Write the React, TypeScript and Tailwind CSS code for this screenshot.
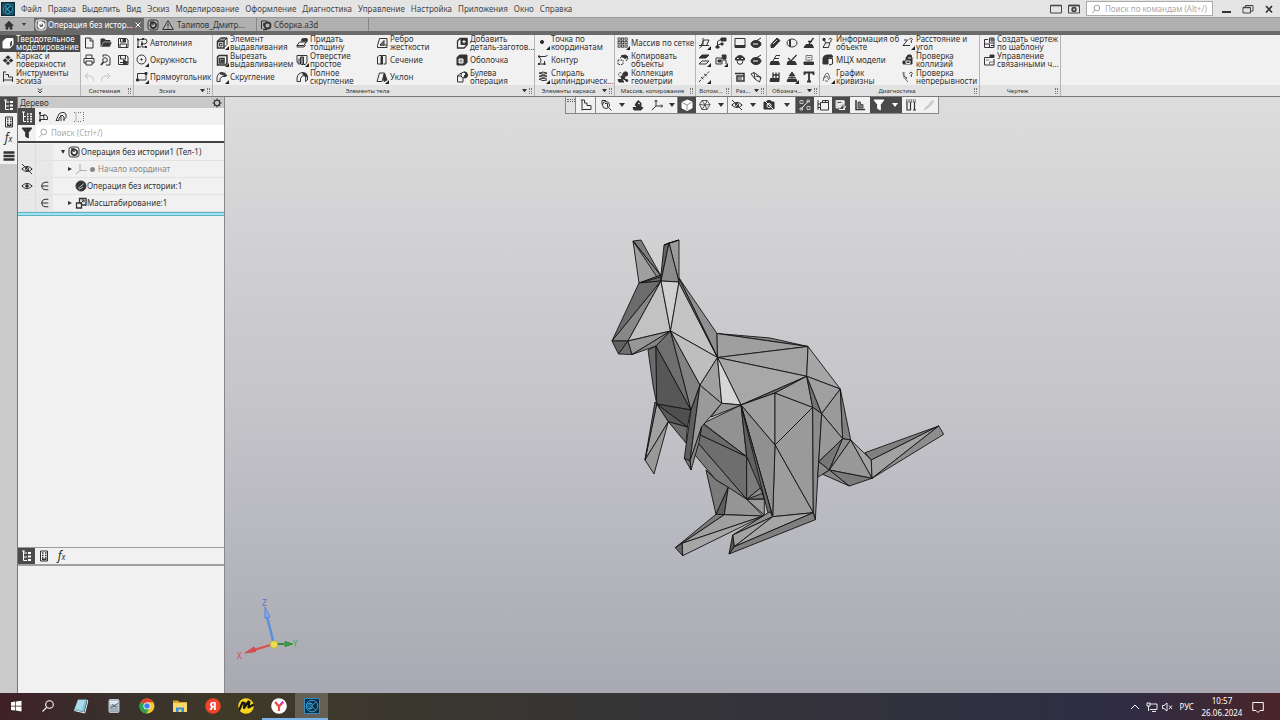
import type { ReactNode } from "react";

/* ---------- glyphs, all on a 12 x 12 grid ---------- */

const F = "currentColor";

const glyphs: Record<string, ReactNode> = {
  solidInv: (<><path d="M1 4.500 4 1.500h7v6l-3 3.500H1z" fill="#fff" stroke="#fff" /><path d="M8 5.500 10 3.500V8L8 10z" fill="#4a4a4a" stroke="none" /></>),
  surface: (<path d="M6 1 9 3.500 6 6 3 3.500zM3 4l3 2.500L3.500 9 .5 6.500zM9 4l2.500 2.500L9 9 6.500 6.500zM6 7l2.500 2L6 11.500 3.500 9z" fill={F} strokeWidth=".5" stroke="#eee" />),
  sketchTools: (<><path d="M1.500 1v8h9V6H6.500V3.500H3.500M1 1h3M10.500 9v2M1.500 9v2" /></>),
  file: (<path d="M2.500 1h5l2.500 2.500V11h-7.500zM7 1v3h3" />),
  folder: (<><path d="M1 10V2h3.500l1 1.500H10V5" fill={F} /><path d="M1 10 3.500 5H12l-2 5z" fill={F} stroke="#ddd" strokeWidth=".6" /></>),
  save: (<><path d="M1.500 1.500h8L11 3v7.500H1.500z" /><path d="M3.500 1.500v3.500h5V1.500M3 10.500V7h6.500v3.500" /><path d="M6 2h2v2.500H6z" fill={F} /></>),
  saveAs: (<><path d="M1.500 1.500h8L11 3v7.500H1.500z" /><path d="M3.500 1.500v3.500h5V1.500M3 8.500h5" /><path d="m6.500 6 4.500 2.500L6.500 11z" fill={F} /></>),
  print: (<><path d="M3 4V1h6v3M3 9H1V4.500h10V9H9M3 7h6v4H3z" /></>),
  preview: (<><path d="M3 3V1h4l3 2.500V11H6" /><circle cx="5" cy="6" r="2.300" /><path d="M3.500 8 1 11" strokeWidth="1.800" /></>),
  undo: (<path d="M5 2 2 5l3 3M2 5h4.500C9 5 10.500 6.500 10.500 10" />),
  redo: (<path d="m7 2 3 3-3 3M10 5H5.500C3 5 1.500 6.500 1.500 10" />),
  autoline: (<><path d="M2 3v7M2 10h3M3 3l4-1M8 2q3-.5 3 2.500T7 7M6 4v6h4" /><path d="M1 1.500h2v2H1zM6 1h2v2H6zM1 9h2v2H1zM9 9h2v2H9zM5 6h2v2H5z" fill={F} stroke="none" /></>),
  circle: (<><circle cx="5.500" cy="5.500" r="4.500" /><circle cx="5.500" cy="5.500" r=".7" fill={F} /></>),
  rect: (<><path d="M1.500 2.500h8.500v6.500H1.500z" /><path d="M.5 8h2v2h-2zM9 1.500h2v2H9z" fill={F} /></>),
  extrude: (<><path d="M1.500 4.500h6.500V11H1.500z" strokeWidth="1.500" /><path d="M3.500 6.500h2.500V9H3.500zM1.500 4 4.500 1H11v6.500L8.500 10" /><path d="M4.500 1H11L8 4H2z" fill="#999" /></>),
  cutExtrude: (<><path d="M1.500 3 3 1.500h8V9l-1.500 2h-8z" strokeWidth="1.500" /><path d="M3.500 4.500h4.500V9H3.500z" strokeWidth="1.500" /><path d="M5 6h2v2H5z" fill={F} /></>),
  fillet: (<><path d="M1 10.500V6.500Q2 1.500 6 1.500q4 0 5 3.500" /><path d="M4 11V7.500q2-3 5-2" /><path d="M4 1.800Q8 1 11 5L9 6Q7 3 4 3.500" fill={F} stroke="none" /><path d="M1 10.500h3" /></>),
  thicken: (<><path d="M1 8.500 3.500 5H10L8 8.500zM6 5V2l5-.5v3.500L10 5" /><path d="M6 2h5v2H6z" fill={F} /><path d="M1 8.500v1.500h7l1.500-2" /></>),
  hole: (<><path d="M1 1.500h10V8L9.500 10.500h-2V4.500M1 1.500V8L3 10.500V4.500" /><path d="M4.500 3h3v7q-1.500 1.500-3 0z" fill="#888" /></>),
  fullFillet: (<><path d="M1 10.500V7q1-5.500 6-5.500 4 0 4.500 4V9l-2 1.500" /><path d="M4.500 10.500V7.500Q5.500 4.500 8 4.500T9.500 10.500" /><path d="M1 10.500h3.500" /><path d="M7 1.500q4 0 4.500 4L9.500 6.500Q8.500 4 6 3z" fill={F} stroke="none" /></>),
  rib: (<><path d="M1.500 8.500 3.500 1.500h7.500v9h-9.500zM11 8H4" /><path d="M4 8 8 3.500V8z" fill="#888" /></>),
  section: (<><path d="M1.500 3 3 1.500h3V10H1.500zM6 1.500h4V10H7.500" /><path d="M5 2.500h1.500V10H5z" fill={F} /></>),
  draft: (<><path d="M1 10.500 3.500 2h5L6 10.500z" /><path d="m8.500 2 2.500 7-3 1.500L7.500 6z" fill={F} /></>),
  addPart: (<><path d="M1.500 4 4 1.500h7V8l-3 3H1.500z" strokeWidth="1.300" /><path d="M5 2h6v5.500H5z" fill={F} /><path d="M8 3v3.500M6.300 4.700h3.500" stroke="#fff" /></>),
  shell: (<><path d="M1 3.500 3.500 1H11v7.500L8.500 11H1z" fill={F} /><path d="M3 5h4v4H3z" fill="#999" stroke="#fff" /></>),
  boolean: (<><path d="M1.500 5H7v6H1.500zM1.500 5 4 2.500h3" /><circle cx="8" cy="4" r="3" fill="#fff" /><path d="M8 1a3 3 0 0 1 1 6l-1-2 2-2z" fill={F} /></>),
  point: (<circle cx="5" cy="5" r="1.600" fill={F} />),
  contour: (<><path d="M2 2.500h6l2.500-1M2 2.500q4 4 0 7.500h5.500V7" /><path d="M1 1.500h2v2H1zM1 9h2v2H1zM6.500 9h2v2h-2z" fill={F} stroke="none" /></>),
  spiral: (<path d="M10 2Q6 0 2 2.200q4 2 8 .3M10 5Q6 3.500 2 5.200q4 2 8 .3M10 8Q6 6.500 2 8.200q4 2.500 8 .8" />),
  grid: (
    <g>
      {[1, 4.5, 8].map((y) => [1, 4.5, 8].map((x) => <rect key={`${x}-${y}`} x={x} y={y} width="2.2" height="2.2" strokeWidth=".8" />))}
    </g>
  ),
  copyObj: (<><path d="M3 4q3-4 7-2 2 3-1 5" /><path d="m4 2 4-1 3 2-3 1.500z" fill={F} /><path d="M1 6h5v4.500H1z" strokeDasharray="1.500 1" /></>),
  collection: (<><circle cx="3.500" cy="3.500" r="2" strokeDasharray="1.500 1" /><circle cx="8.500" cy="3" r="2.200" fill={F} /><circle cx="6" cy="6.500" r="1.800" fill={F} /><path d="M1 8.500h4L7 11H2zM7 8l4 1-1 2z" fill={F} /></>),
  plane: (<><path d="M3 8.500 6 3h5L8.500 8.500zM5 1v8M1 8.500h10M1.500 11 5 8" /></>),
  lcs: (<><path d="M2.500 10.500v-6l4-2.500M2.500 8 7 6.500" /><path d="M6 1h5v3H6zM1 9h3v2H1zM6 6h2v2H6z" fill={F} /></>),
  offsetPlane: (<><path d="M1 4 4 1h7L8 4z" fill={F} /><path d="M1 10l3-3h7l-3 3z" /></>),
  camera3: (<><path d="M1 4h6v6H1z" /><path d="M7 1h4v4H8zM3 6h3v2H3z" fill={F} /><path d="M8 6h3v4" /></>),
  axis: (<path d="m1 11 3-3.500L8 4l3-3.500M3 6l3 3M6 3l3 2" strokeDasharray="3 1" />),
  dim1: (<><path d="M1 1.500h10V9H1z" /><path d="M1 8.500h10v2H1z" fill={F} /></>),
  dim2: (<><ellipse cx="6" cy="7" rx="5" ry="3.500" fill={F} /><path d="m2 6 4-2 5-3" /><path d="M3 7h5" stroke="#fff" /></>),
  dim3: (<><path d="M1.500 4Q6-1 10.500 4v2h-9z" fill={F} /><path d="M3 4.500h2M7 4.500h2" stroke="#fff" /><circle cx="6" cy="7.500" r="2.800" /></>),
  dim4: (<><path d="M1 2.500h9V10H3V5h7" strokeWidth="1.500" /><path d="M5 6v3M7 6v3" /></>),
  dim5: (<path d="m1 3 3-1.500 7 5L9.500 11 5 8zM4 1.500 5 8M11 6.500 6 5" />),
  pin: (<><path d="M2 7.500 8 1l3 2.500-6.500 7H2z" fill={F} /><path d="m4 7 4-4" stroke="#ddd" /></>),
  cyl: (<><ellipse cx="6" cy="6" rx="5" ry="4" /><path d="M4 2.500v7" strokeWidth="2" /></>),
  stamp: (<><path d="M3 7.500h6l1.500 3H1z" fill={F} /><path d="m6 7 4.500-6M5 4.500h4" strokeWidth="1.300" /></>),
  stamp2: (<><path d="M2 7.500h7.500l1 3H1z" fill={F} /><path d="M4 7 7 1.500h4M5 4.500h5" /></>),
  stamp3: (<><path d="M2 7.500h7l1.500 3H1z" fill={F} /><path d="m2 4 3 3 5.500-6" strokeWidth="1.300" /></>),
  stamp4: (<><path d="M1 8h9.500v2.500H1z" fill={F} /><path d="M3 1.500h6V6H3zM6 6v2M4.500 3.500h3" stroke="#777" /></>),
  stamp5: (<><path d="M1.500 7.500H10v3H1z" fill={F} /><path d="M4 7V1.500M7 7V1.500M4 4h6V1.500M10 4v4" strokeWidth="1.300" /></>),
  stamp6: (<><path d="M2 8h8l1 2.500H1z" fill={F} /><path d="M6 1 3 5h6zM6 4v4M2 6.500h8" fill={F} strokeWidth=".8" /></>),
  text: (<path d="M1.500 4V1.500h9V4M6 1.500v9M4 10.500h4" strokeWidth="1.800" />),
  info: (<><path d="M1 10.500 3.500 6l4.500-.5-1.500 5zM1 2l3 4" /><path d="M7 2.500q.5-1.500 2-1.200 2 .7-.2 2.500V5" /><path d="M1 1.500h2v2H1z" fill={F} /></>),
  mass: (<><path d="M1 4q1-3 4-3h5v2H6v7H1z" fill={F} /><path d="M6 4.500h4.500V10L7 11" /><path d="m6 3 3-2 2 2z" fill={F} /></>),
  curve: (<path d="M1 10q2-8 4.500-8Q7 3 8 8M1 7.500 5 5l2 4M3 10h3" stroke="#666" />),
  dist: (<><path d="m1 8.500 5-6M1 8.500h7" /><path d="M7.500 2.500q.5-1.500 2-1.200 2 .7-.2 2.500V6M2 3h3" /></>),
  collide: (<><path d="M1 10V7h3V4l2-3h3l1 3v6z" fill={F} /><path d="M4 7h4v2.500H4zM6 4h3" stroke="#eee" /></>),
  cont: (<><path d="M1 1q0 5 4 5.500M2 1v5.500L6 11M1 4l4 4" stroke="#666" /><path d="M7.500 2.500q.5-1.500 2-1.200 2 .7-.2 2.500V6" /></>),
  drawing: (<><path d="M1.500 2.500H5M1.500 2.500v8H11V6M6.500 1h4.500v5H6.500z" stroke="#3d3040" /><path d="M1.500 7h5v3.500M8 8.500h3M8 2h2v2H8z" /></>),
  drawing2: (<><path d="M7 3.500H1.500v7.500H11V5" stroke="#3d3040" /><path d="M7 1h4v2.500H7z" fill={F} /><path d="M3 6h3M6.500 11V8H11" stroke="#777" /></>),
  tree: (<><path d="M2.500 1v9.500H6M2.500 3H6M2.500 7H6M1 1h3" /><path d="M7 2h3v2H7zM7 5.500h3v2H7zM7 9h3v2H7z" fill={F} stroke="none" /></>),
  treeWide: (<><path d="M1 1h3M2.500 1v9.500H5M2.500 5.500H5" /><path d="M6 3h1.500M9 3h2M6 5.500h1.500M9 5.500h2M6 8h1.500M9 8h2M6 10.500h1.500M9 10.500h2" strokeWidth="1.300" /></>),
  calc: (<><path d="M2.500 1h7v10h-7z" /><path d="M4 3h1.500M7 3h1.500M4 5.500h1.500M7 5.500h1.500M4 8h1.500M7 8h1.500M4 9.500h4.500" strokeWidth="1.300" /></>),
  bars: (<path d="M.5 2.500h11M.5 6h11M.5 9.500h11" strokeWidth="2.400" />),
  rel: (<><path d="M2 1.500v8.500M2 4.500h3.500l1.500-1M2 8.500h6" /><path d="M5.500 4h2.500l1.500 2v2.500H6z" /><path d="M1 1h2v2H1zM1 8.500h2v2H1z" fill={F} stroke="none" /></>),
  struct: (<><path d="M1 9.500 4 3q2-2 5-1.500t2 5L8.500 9M4 9.500V7l3-3 2 2v4M1 9.500h3M6 4v6" /></>),
  dotted: (<path d="M1 1.500h2v9H1M10.500 1v9.500M5 1.500h4M5 10.500h4" strokeDasharray="1 1" stroke="#777" />),
  gear: (<><circle cx="6" cy="6" r="3.400" strokeWidth="1.600" /><path d="M6 .5v2M6 9.500v2M.5 6h2M9.500 6h2M2 2l1.500 1.500M8.500 8.500 10 10M10 2 8.500 3.500M3.500 8.500 2 10" /></>),
  funnel: (<path d="M1 1h10L7.300 5.500V11L4.700 9.500v-4z" fill={F} />),
  search: (<><circle cx="7" cy="4.800" r="3.400" /><path d="M4.500 7.500 1.500 11" /></>),
  eye: (<><path d="M.8 6Q6 .8 11.200 6 6 11.200.8 6z" /><circle cx="6" cy="6" r="1.300" fill={F} /></>),
  eyeOff: (<><path d="M.8 6Q6 .8 11.200 6 6 11.200.8 6zM1 1l10 10" /><circle cx="6" cy="6" r="1.500" /></>),
  elem: (<path d="M10 1.500H6Q2 2 2 6t4 4.500h4M2 6h8" strokeWidth="1.200" />),
  origin: (<path d="M5 1v6.500H12M5 7.500.8 11" stroke="#aaa" />),
  op: (<><rect x="1" y="1" width="10" height="10" rx="2.500" /><circle cx="6.300" cy="6.300" r="2.800" strokeWidth="1.700" /><path d="M3 3h3v3" strokeWidth="1.300" /></>),
  ball: (<><circle cx="6" cy="6" r="5" fill={F} /><path d="m3 8.500 6-5M4 9.500 8 7" stroke="#ddd" strokeWidth=".8" /></>),
  scale: (<><path d="M1.500 6h5v5h-5zM4.500 6V1.500H11V8H6.500" strokeWidth="1.300" /><path d="m5 7 4-4M6.500 3H9v2.500" /></>),
  home: (<path d="M1 6.500 6 1.500l5 5H9.500V11H7.300V8H4.700v3H2.500V6.500z" fill={F} />),
  warn: (<path d="M6 1.500 11.300 10.500H.7zM6 4.500v3.200M6 8.700v1" />),
  assembly: (<><path d="M1.500 10V2h5l1 2" /><circle cx="7.500" cy="6.500" r="3" strokeWidth="1.800" /><path d="M3 10.500h4M4 4v3" strokeWidth="1.500" /></>),
  window: (<><path d="M.5 2.500h11v7.500H.5z" /><path d="M.5 2.500h11" strokeWidth="1.500" /></>),
  windowGear: (<><path d="M.5 2.500h11v7.500H.5z" /><path d="M.5 2.500h11" strokeWidth="1.800" /><circle cx="6" cy="6.500" r="1.800" strokeWidth="1.800" /></>),
  sketchPlane: (<path d="M2 1v9.500h9V6.500H7V4H4.500V1zM2 1H.8M2 10.500v1" />),
  zoomBox: (<><path d="M2 1.500h4M2 1.500v4M9 9l2.500 2.500" /><circle cx="6" cy="6" r="3.500" /><path d="M5 4.500h2.500V8" /></>),
  orient: (<><path d="M1 8.500h10L9 11H2z" fill={F} /><path d="M3 6 6 1.500 9 4v4H5z" fill={F} /><path d="m6 4 2 1" stroke="#fff" /></>),
  axes: (<path d="M5 1v6H12M5 7 .8 11M3.500 2.500 5 1l1.500 1.500M10 5.500 11.500 7 10 8.500" />),
  cube: (<><path d="M1 3.500 6.500 1 11 3v6L6 11.500 1 9z" fill="#fff" stroke="#fff" /><path d="M1.500 3.800 6 6l4.500-2.500M6 6v5" stroke="#777" strokeWidth=".8" /></>),
  wire: (<path d="M3 1.500h5l3 4-3 5H3l-2.500-5zM3 1.500 6 6l2 4.500M.5 5.500 6 6l5-.5M8 1.500 6 6l-3 4.500" strokeWidth=".8" />),
  camOff: (<><path d="M1 3h2.500l1-1.500h3l1 1.500H11v7H1z" fill={F} /><circle cx="6" cy="6.500" r="2" stroke="#fff" /><path d="m1 1 10 10" stroke="#fff" /></>),
  snap: (<><path d="m2 10 7.500-8" stroke="#fff" /><path d="M1 1.500h3v3H1zM8 7.500h3v3H8zM8 1h2.500v2H8zM1 9h2.500v2H1z" stroke="#ddd" strokeWidth=".8" /></>),
  layers: (<><path d="M3.500 3.500h8V11h-8zM1 1v10M3.500 5H.8M3.500 8.500H.8M5.500 3.500V1.500h6M8.500 1.500v2M11.500 1.500v2" /></>),
  sheet: (<><path d="M1 1.500h8V4L5 9H1z" fill="#ddd" stroke="#ddd" /><path d="M3 6 9 2v8l2-3M4 10.500h6" stroke="#fff" /><path d="M2.500 3.500h4" stroke="#555" /></>),
  steps: (<><path d="M2 1v9.500h9" strokeWidth="1.500" /><path d="M4 3h2.500v2.500H9V9H4z" fill="#777" stroke="#555" /></>),
  funnelW: (<path d="M1 1h10L7.300 5.500V11L4.700 9.500v-4z" fill="#fff" stroke="#fff" />),
  measure: (<><path d="M1 1h10M1 2.800h10" strokeDasharray="1.500 .8" /><path d="M2 3v8h1.500M5.500 3v8H2.500M9.500 3v8M8 11h3" strokeWidth="1.200" /></>),
  brush: (<path d="m1 11 5-5.500L9 1.500l1.500 1L7 7z" stroke="#bbb" fill="#ddd" />),
};

function Glyph({ name, className = "size-3" }: { name: string; className?: string }) {
  return (
    <svg viewBox="0 0 12 12" className={`shrink-0 ${className}`} fill="none" stroke="currentColor" strokeWidth="1" aria-hidden="true">
      {glyphs[name]}
    </svg>
  );
}

function Caret({ className = "w-1.5" }: { className?: string }) {
  return (
    <svg viewBox="0 0 6 4" className={`shrink-0 ${className}`} aria-hidden="true">
      <path d="M0 0h6L3 4z" fill="currentColor" />
    </svg>
  );
}

/* ---------- ribbon ---------- */

type Tool = { icon: string; label?: string[]; more?: boolean; name?: string; off?: boolean };
type Group = { title: string; width: string; cols: string; pad: string; caret?: boolean; tools: Tool[] };

const t = (icon: string, label: string[], more = false): Tool => ({ icon, label, more });
const i = (icon: string, name: string, more = false, off = false): Tool => ({ icon, name, more, off });

const groups: Group[] = [
  {
    title: "Системная", width: "w-[53px]", cols: "grid-cols-[repeat(3,17px)]", pad: "pl-[2px]",
    tools: [
      i("file", "Создать"), i("folder", "Открыть"), i("save", "Сохранить"),
      i("print", "Печать"), i("preview", "Просмотр"), i("saveAs", "Сохранить как"),
      i("undo", "Отменить", false, true), i("redo", "Повторить", false, true),
    ],
  },
  {
    title: "Эскиз", width: "w-[79px]", cols: "grid-cols-1", pad: "pl-[2px]", caret: true,
    tools: [t("autoline", ["Автолиния"]), t("circle", ["Окружность"], true), t("rect", ["Прямоугольник"], true)],
  },
  {
    title: "Элементы тела", width: "w-[322px]", cols: "grid-cols-[repeat(4,80px)]", pad: "pl-[3px]", caret: true,
    tools: [
      t("extrude", ["Элемент", "выдавливания"], true), t("thicken", ["Придать", "толщину"]), t("rib", ["Ребро", "жесткости"]), t("addPart", ["Добавить", "деталь-заготов..."]),
      t("cutExtrude", ["Вырезать", "выдавливанием"], true), t("hole", ["Отверстие", "простое"], true), t("section", ["Сечение"]), t("shell", ["Оболочка"]),
      t("fillet", ["Скругление"], true), t("fullFillet", ["Полное", "скругление"]), t("draft", ["Уклон"], true), t("boolean", ["Булева", "операция"]),
    ],
  },
  {
    title: "Элементы каркаса", width: "w-20", cols: "grid-cols-1", pad: "pl-[2px]", caret: true,
    tools: [t("point", ["Точка по", "координатам"], true), t("contour", ["Контур"]), t("spiral", ["Спираль", "цилиндрическ..."], true)],
  },
  {
    title: "Массив, копирование", width: "w-[81px]", cols: "grid-cols-1", pad: "pl-[2px]",
    tools: [t("grid", ["Массив по сетке"], true), t("copyObj", ["Копировать", "объекты"]), t("collection", ["Коллекция", "геометрии"])],
  },
  {
    title: "Вспом...", width: "w-9", cols: "grid-cols-2", pad: "pl-[2px]",
    tools: [i("plane", "Плоскость", true), i("lcs", "Система координат"), i("offsetPlane", "Смещённая плоскость", true), i("camera3", "Контрольная точка", true), i("axis", "Ось", true)],
  },
  {
    title: "Раз...", width: "w-[35px]", cols: "grid-cols-2", pad: "pl-[2px]", caret: true,
    tools: [i("dim1", "Линейный размер"), i("dim2", "Радиальный размер"), i("dim3", "Диаметр"), i("dim2", "Угловой размер"), i("dim4", "Размер блока"), i("dim5", "Размер детали")],
  },
  {
    title: "Обознач...", width: "w-[53px]", cols: "grid-cols-[repeat(3,17px)]", pad: "pl-[2px]", caret: true,
    tools: [
      i("pin", "Резьба"), i("cyl", "Отверстие"), i("stamp", "База"),
      i("stamp2", "Шероховатость"), i("stamp3", "Линия-выноска"), i("stamp4", "Клеймо"),
      i("stamp5", "Допуск"), i("stamp6", "Маркировка", true), i("text", "Надпись"),
    ],
  },
  {
    title: "Диагностика", width: "w-40", cols: "grid-cols-[repeat(2,80px)]", pad: "pl-[2px]",
    tools: [
      t("info", ["Информация об", "объекте"]), t("dist", ["Расстояние и", "угол"], true),
      t("mass", ["МЦХ модели"]), t("collide", ["Проверка", "коллизий"]),
      t("curve", ["График", "кривизны"], true), t("cont", ["Проверка", "непрерывности"]),
    ],
  },
  {
    title: "Чертеж", width: "w-[81px]", cols: "grid-cols-1", pad: "pl-[3px]",
    tools: [t("drawing", ["Создать чертеж", "по шаблону"]), t("drawing2", ["Управление", "связанными ч..."])],
  },
];

function ToolButton({ tool }: { tool: Tool }) {
  return (
    <button type="button" aria-label={tool.name} className={`flex min-w-0 items-center gap-[2px] text-left ${tool.off ? "text-[#c4c4c4]" : "text-[#333]"}`}>
      <span className="relative shrink-0">
        <Glyph name={tool.icon} />
        {tool.more && (
          <svg viewBox="0 0 4 4" className="absolute -right-px -bottom-px size-1" aria-hidden="true">
            <path d="M4 0v4H0z" fill="#222" />
          </svg>
        )}
      </span>
      {tool.label && (
        <span className="leading-[8px] whitespace-nowrap">
          {tool.label.map((line) => (
            <span key={line} className="block">{line}</span>
          ))}
        </span>
      )}
    </button>
  );
}

const modes = [
  { icon: "solidInv", label: ["Твердотельное", "моделирование"], active: true },
  { icon: "surface", label: ["Каркас и", "поверхности"], active: false },
  { icon: "sketchTools", label: ["Инструменты", "эскиза"], active: false },
];

function Ribbon() {
  return (
    <div className="flex h-[62px] border-b border-[#777] bg-[#f1f1f1] text-[#333]">
      <div className="flex w-[81px] shrink-0 flex-col border-r border-[#b5b5b5]">
        <div className="grid h-[50px] grid-rows-3">
          {modes.map((m) => (
            <button key={m.label[0]} type="button" className={`flex items-center gap-[2px] pl-[2px] text-left ${m.active ? "bg-[#4a4a4a] text-white" : "bg-[#ececec] text-[#333]"}`}>
              <Glyph name={m.icon} />
              <span className="leading-[8px] whitespace-nowrap">
                {m.label.map((line) => (
                  <span key={line} className="block">{line}</span>
                ))}
              </span>
            </button>
          ))}
        </div>
        <button type="button" aria-label="Ещё" className="flex flex-1 items-center justify-center bg-[#e2e2e2]">
          <svg viewBox="0 0 6 6" className="size-1.5" fill="none" stroke="#333" aria-hidden="true"><path d="m1 .5 2 2 2-2M1 3l2 2 2-2" /></svg>
        </button>
      </div>
      {groups.map((g) => (
        <section key={g.title} className={`flex shrink-0 flex-col border-r border-[#b5b5b5] ${g.width}`}>
          <div className={`grid h-[50px] grid-rows-3 ${g.cols} ${g.pad}`}>
            {g.tools.map((tool, n) => (
              <ToolButton key={n} tool={tool} />
            ))}
          </div>
          <div className="flex flex-1 items-center gap-[2px] bg-[#e2e2e2] px-[2px] text-[6px] leading-[10px]">
            <h2 className="flex-1 text-center whitespace-nowrap">{g.title}</h2>
            {g.caret && <Caret className="w-[5px]" />}
            <span className="h-1.5 w-[3px] border-x border-dotted border-[#777]" />
          </div>
        </section>
      ))}
      <div className="flex flex-1 flex-col justify-end"><div className="h-[11px] bg-[#e4e4e4]" /></div>
    </div>
  );
}

/* ---------- title, tabs ---------- */

const menu = ["Файл", "Правка", "Выделить", "Вид", "Эскиз", "Моделирование", "Оформление", "Диагностика", "Управление", "Настройка", "Приложения", "Окно", "Справка"];

function MenuBar() {
  return (
    <header className="flex h-[17px] items-center bg-[#e4e4e4] text-[#444]">
      <svg viewBox="0 0 14 14" className="ml-px size-[14px]" fill="none" stroke="#2b9fc4" aria-hidden="true">
        <rect width="14" height="14" fill="#122b38" stroke="none" />
        <path d="M2 2h10v10H2z" strokeWidth=".6" />
        <circle cx="7" cy="7" r="4.500" />
        <path d="M5 4v6M10 3.500 6 7l4 4M5 7h2" strokeWidth="1.200" />
      </svg>
      <nav className="ml-1.5 flex gap-1.5">
        {menu.map((m) => (
          <button key={m} type="button">{m}</button>
        ))}
      </nav>
      <div className="ml-auto flex items-center">
        <button type="button" aria-label="Окно"><Glyph name="window" /></button>
        <button type="button" aria-label="Вид окна" className="ml-1.5"><Glyph name="windowGear" /></button>
        <label className="ml-1.5 flex h-[15px] w-[127px] items-center gap-1 border border-[#aaa] bg-white pl-1 text-[#888]">
          <Glyph name="search" className="size-2.5" />
          <input type="text" aria-label="Поиск по командам" placeholder="Поиск по командам (Alt+/)" className="w-full min-w-0 bg-transparent outline-none placeholder:text-[#aaa]" />
        </label>
        <button type="button" aria-label="Свернуть" className="ml-[9px] flex h-3 w-3 items-end pb-[2px]"><span className="h-[2px] w-[9px] bg-[#333]" /></button>
        <button type="button" aria-label="Восстановить" className="ml-[8px]">
          <svg viewBox="0 0 12 12" className="size-3" fill="none" stroke="#444" aria-hidden="true"><path d="M3.500 4V2.500h7.500V8H9M1 4.500h7.500V10H1z" /><path d="M1 4.500h7.500" strokeWidth="1.500" /></svg>
        </button>
        <button type="button" aria-label="Закрыть" className="mr-[5px] ml-[9px]">
          <svg viewBox="0 0 12 12" className="size-3" stroke="#333" strokeWidth="1.700" aria-hidden="true"><path d="m3 3 6 6.500M9 3 3 9.500" /></svg>
        </button>
      </div>
    </header>
  );
}

function TabBar() {
  return (
    <div className="flex h-[18px] border-t border-b-4 border-t-[#999] border-b-[#6a6a6a] bg-[#b0b0b0] text-[#333]">
      <button type="button" aria-label="Главная" className="flex w-[34px] items-center gap-2 pl-1">
        <Glyph name="home" className="size-2.5" />
        <Caret className="w-1" />
      </button>
      <div className="flex w-[110px] items-center gap-px bg-[#6a6a6a] pl-px text-white">
        <Glyph name="op" />
        <span className="flex-1 whitespace-nowrap">Операция без истор...</span>
        <button type="button" aria-label="Закрыть вкладку" className="mr-1">
          <svg viewBox="0 0 8 8" className="size-2" stroke="#fff" aria-hidden="true"><path d="m1.500 1.500 5 5M6.500 1.500l-5 5" /></svg>
        </button>
      </div>
      <button type="button" className="flex w-[113px] items-center gap-[3px] border-r border-[#888] pl-[3px]">
        <Glyph name="op" /><Glyph name="warn" /><span className="whitespace-nowrap">Талипов_Дмитр...</span>
      </button>
      <button type="button" className="flex w-[112px] items-center gap-[2px] border-r border-[#888] pl-[3px]">
        <Glyph name="assembly" /><span>Сборка.a3d</span>
      </button>
    </div>
  );
}

/* ---------- left side ---------- */

function FxMark() {
  return (
    <span className="flex items-baseline text-[12px] leading-[14px] italic">
      f<span className="text-[8px]">x</span>
    </span>
  );
}

function SideStrip() {
  const items = ["tree", "calc", "fx", "bars"];
  return (
    <div className="flex w-[18px] shrink-0 flex-col border-r border-[#777] bg-[#cacaca]">
      {items.map((name, n) => (
        <button key={name} type="button" aria-label={name} className={`flex items-center justify-center ${n === 0 ? "h-4 bg-[#4a4a4a] text-white" : "h-[17px] bg-[#f1f1f1] text-[#333]"}`}>
          {name === "fx" ? <FxMark /> : <Glyph name={name} />}
        </button>
      ))}
    </div>
  );
}

function TreeRow({ eye, elem, children }: { eye?: string; elem?: boolean; children: ReactNode }) {
  return (
    <li className="flex h-[17px] border-b border-[#e3e3e3] text-[#333]">
      <span className="flex w-[18px] items-center justify-center border-r border-[#ddd] bg-[#e8e8e8]">{eye && <Glyph name={eye} />}</span>
      <span className="flex w-[17px] items-center justify-center bg-[#e8e8e8]">{elem && <Glyph name="elem" className="size-2.5" />}</span>
      {children}
    </li>
  );
}

function Expander({ open }: { open?: boolean }) {
  return (
    <svg viewBox="0 0 4 4" className="size-1" fill="#333" aria-hidden="true">
      <path d={open ? "M0 0h4L2 4z" : "M0 0v4l4-2z"} />
    </svg>
  );
}

function TreePanel() {
  return (
    <aside className="flex w-[207px] shrink-0 flex-col border-r border-[#888] bg-[#f1f1f1] text-[#333]">
      <div className="flex h-[11px] items-center justify-between bg-[#c9c9c9] px-[2px] leading-[11px]">
        <h2>Дерево</h2>
        <button type="button" aria-label="Настройка панели"><Glyph name="gear" className="size-2.5" /></button>
      </div>
      <div className="flex h-[17px]">
        <button type="button" aria-label="Дерево" className="flex w-[17px] items-center justify-center bg-[#4a4a4a] text-white"><Glyph name="treeWide" /></button>
        <button type="button" aria-label="Отношения" className="flex w-[17px] items-center justify-center"><Glyph name="rel" /></button>
        <button type="button" aria-label="Структура" className="flex w-[18px] items-center justify-center"><Glyph name="struct" /></button>
        <button type="button" aria-label="Область" className="flex w-[17px] items-center justify-center"><Glyph name="dotted" /></button>
      </div>
      <div className="flex h-[18px] items-center border-b-2 border-[#444] bg-white">
        <button type="button" aria-label="Фильтр" className="flex h-full w-[18px] items-center justify-center bg-[#f1f1f1]"><Glyph name="funnel" /></button>
        <label className="flex flex-1 items-center gap-[3px] pl-[2px] text-[#999]">
          <Glyph name="search" className="size-2.5" />
          <input type="text" aria-label="Поиск в дереве" placeholder="Поиск (Ctrl+/)" className="w-full min-w-0 bg-transparent outline-none placeholder:text-[#aaa]" />
        </label>
      </div>
      <ul className="flex flex-col pt-px">
        <TreeRow>
          <span className="flex items-center gap-[3px] pl-2"><Expander open /><span className="flex items-center gap-px"><Glyph name="op" />Операция без истории1 (Тел-1)</span></span>
        </TreeRow>
        <TreeRow eye="eyeOff">
          <span className="flex items-center gap-[3px] pl-[15px] text-[#888]"><Expander /><Glyph name="origin" /><span className="size-[5px] rounded-full bg-[#888]" /><span>Начало координат</span></span>
        </TreeRow>
        <TreeRow eye="eye" elem>
          <span className="flex items-center pl-[22px]"><Glyph name="ball" />Операция без истории:1</span>
        </TreeRow>
        <TreeRow elem>
          <span className="flex items-center gap-[3px] pl-[15px]"><Expander /><span className="flex items-center"><Glyph name="scale" />Масштабирование:1</span></span>
        </TreeRow>
      </ul>
      <div className="h-1 border-y border-[#5fb4c4] bg-[#9fe4f0]" />
      <div className="flex-1" />
      <div className="flex h-[19px] border-t border-b-2 border-t-[#999] border-b-[#a0a0a0]">
        <button type="button" aria-label="Дерево" className="flex w-[17px] items-center justify-center bg-[#4a4a4a] text-white"><Glyph name="tree" /></button>
        <button type="button" aria-label="Параметры" className="flex w-[18px] items-center justify-center"><Glyph name="calc" /></button>
        <button type="button" aria-label="Переменные" className="flex w-[17px] items-center justify-center"><FxMark /></button>
      </div>
      <div className="h-[127px]" />
    </aside>
  );
}

/* ---------- viewport ---------- */

const faces: [string, string][] = [
  // ears
  ["633,241 641,240 661,276", "#7d7d7d"],
  ["633,241 661,276 639,283", "#9f9f9f"],
  ["633,241 661,276 657,277", "#8a8a8a"],
  ["639,283 655,277 661,275 661,281", "#565656"],
  ["639,283 661,277 661,281", "#666666"],
  ["664,245 669,243 661,281 661,275", "#636363"],
  ["669,243 679,240 679,282", "#9b9b9b"],
  ["669,243 679,282 661,281", "#8b8b8b"],
  ["664,245 669,243 679,240", "#7a7a7a"],
  // head
  ["639,283 661,281 612,341", "#6c6c6c"],
  ["661,281 612,341 628,341", "#888888"],
  ["661,281 670.500,331 628,341", "#c2c2c2"],
  ["661,281 679,282 670.500,331", "#d0d0d0"],
  ["679,282 717.500,357.500 670.500,331", "#c4c4c4"],
  ["612,341 628,341 618.500,354", "#626262"],
  ["628,341 632,354.500 618.500,354", "#6f6f6f"],
  ["628,341 670.500,331 632,354.500", "#979797"],
  ["670.500,331 656,346 632,354.500", "#868686"],
  // neck and chest
  ["679,278 717,333.500 717.500,357.500", "#8f8f8f"],
  ["679,278 717.500,357.500 679,283", "#6d6d6d"],
  ["648,350 656,346 656.700,404 653,385", "#6b6b6b"],
  ["656,346 691,410 656.700,404", "#575757"],
  ["656,346 670.500,331 691,410", "#6f6f6f"],
  ["670.500,331 700,385 691,410", "#828282"],
  ["670.500,331 717.500,357.500 700,385", "#bebebe"],
  ["656.700,404 691,410 687.300,427", "#4f4f4f"],
  ["656.700,404 687.300,427 668.300,421.700", "#5a5a5a"],
  ["668.300,421.700 687.300,427 686,443", "#6c6c6c"],
  // back
  ["717,333.500 770,338 808,346.500", "#868686"],
  ["717,333.500 808,346.500 717.500,357.500", "#9f9f9f"],
  ["717.500,357.500 808,346.500 806.700,376.300", "#a3a3a3"],
  ["717.500,357.500 806.700,376.300 741,405", "#a8a8a8"],
  ["741,405 775,393 806.700,376.300", "#707070"],
  ["808,346.500 840.300,389 806.700,376.300", "#a6a6a6"],
  // haunch
  ["741,405 775,393 775,445", "#9f9f9f"],
  ["775,393 812.700,407.300 775,445", "#9e9e9e"],
  ["775,393 806.700,376.300 812.700,407.300", "#a0a0a0"],
  ["775,445 812.700,407.300 813.300,512.700", "#9a9a9a"],
  ["775,445 813.300,512.700 772.700,516.700", "#9d9d9d"],
  ["741,405 775,445 772.700,516.700", "#909090"],
  ["806.700,376.300 821.700,413.700 812.700,407.300", "#747474"],
  ["806.700,376.300 840.300,389 821.700,413.700", "#a0a0a0"],
  ["812.700,407.300 821.700,413.700 818.700,461.700 815.300,519.700 813.300,512.700", "#8c8c8c"],
  ["821.700,413.700 840.300,389 842.700,438.700", "#9a9a9a"],
  ["840.300,389 850.700,440 842.700,438.700", "#808080"],
  ["821.700,413.700 842.700,438.700 818.700,461.700", "#999999"],
  // tail
  ["842.700,438.700 829.300,470 818.700,461.700", "#777777"],
  ["842.700,438.700 850.700,440 829.300,470", "#8c8c8c"],
  ["818.700,461.700 829.300,470 817.700,477.300", "#8a8a8a"],
  ["850.700,440 871.300,460 872,478.300", "#a3a3a3"],
  ["850.700,440 872,478.300 829.300,470", "#999999"],
  ["829.300,470 872,478.300 849.300,486", "#7b7b7b"],
  ["829.300,470 849.300,486 822.700,474.300", "#858585"],
  ["865,452.700 938.700,426 871.300,460", "#808080"],
  ["871.300,460 938.700,426 872,478.300", "#a2a2a2"],
  ["872,478.300 938.700,426 943.700,434.300", "#8d8d8d"],
  // belly
  ["741,405 706,422 704,424 746.700,456.700", "#929292"],
  ["702,423 700,435 746.700,456.700", "#6b6b6b"],
  ["700,435 746.700,456.700 746.700,499.300 698,443", "#6e6e6e"],
  ["698,443 746.700,499.300 716,480 695,455", "#7b7b7b"],
  ["746.700,456.700 761.700,487 746.700,499.300", "#7c7c7c"],
  ["746.700,499.300 761.700,487 764,499", "#8e8e8e"],
  ["746.700,499.300 762.700,493.300 764,499", "#777777"],
  ["741,405 772.700,516.700 746.700,456.700", "#606060"],
  ["741,405 772.700,516.700 768,513", "#6b6b6b"],
  // rear left leg
  ["706,470 716,480 728.300,487.300 716,514.300", "#7a7a7a"],
  ["728.300,487.300 724.300,514.700 716,514.300", "#5e5e5e"],
  ["728.300,487.300 746.700,499.300 763.300,516 724.300,514.700", "#959595"],
  ["746.700,499.300 764.300,499.300 764.300,515", "#9c9c9c"],
  ["675.300,547.700 716,514.300 724.300,514.700 682,543.300", "#7b7b7b"],
  ["682,543.300 724.300,514.700 763.300,516", "#a0a0a0"],
  ["682,543.300 763.300,516 682.700,555.700", "#a6a6a6"],
  ["675.300,547.700 682,543.300 682.700,555.700", "#666666"],
  // rear right foot
  ["732.700,535 770,511.700 772.700,516.700", "#8f8f8f"],
  ["732.700,535 772.700,516.700 734.300,546.700", "#a3a3a3"],
  ["734.300,546.700 772.700,516.700 813.300,512.700", "#a6a6a6"],
  ["729,554 734.300,546.700 813.300,512.700 815.300,519.700", "#7f7f7f"],
  ["729,554 732.700,535 734.300,546.700", "#555555"],
  // front arms
  ["656.700,404 668.300,421.700 645,460", "#a1a1a1"],
  ["668.300,421.700 645,460 654,474", "#999999"],
  ["656.700,404 645,460 655,402", "#6c6c6c"],
  ["700,385 691,410 684.300,458.300 690,461", "#5f5f5f"],
  ["700,385 721.700,403.300 701.700,426.700 690,461", "#9a9a9a"],
  ["701.700,426.700 699,442 691,470 690,461", "#8a8a8a"],
  ["684.300,458.300 690,461 691,470", "#777777"],
  ["700,385 717.500,357.500 721.700,403.300", "#a0a0a0"],
  ["717.500,357.500 741,405 721.700,403.300", "#d6d6d6"],
  ["721.700,403.300 741,405 711,417", "#979797"],
];

function Model() {
  return (
    <svg viewBox="225 97 1055 596" className="h-full w-full" stroke="#141414" strokeWidth=".9" strokeLinejoin="round" role="img" aria-label="Кенгуру">
      {faces.map(([points, fill]) => (
        <polygon key={points} points={points} fill={fill} />
      ))}
    </svg>
  );
}

function Triad() {
  return (
    <svg viewBox="0 0 70 66" className="absolute bottom-[30px] left-[9px] h-[66px] w-[70px]" fill="none" aria-hidden="true">
      <path d="m40 47-8-31" stroke="#5b8fe0" strokeWidth="2.500" />
      <path d="m31 10 5 10-5 1z" fill="#82aaf0" stroke="#4a7ad8" strokeWidth=".8" />
      <path d="m40 47-20 6" stroke="#d85050" strokeWidth="2.200" />
      <path d="m11 56 9-6 1.500 4.500z" fill="#e04e4e" stroke="#c94040" strokeWidth=".8" />
      <path d="M40 47h10" stroke="#2e7d3a" strokeWidth="1.800" />
      <path d="M51 44.500 58.500 47 51 49.500z" fill="#2fa838" stroke="#2a8a34" />
      <circle cx="40" cy="47.500" r="3.800" fill="#e8dc50" stroke="#b5a93c" strokeWidth=".8" />
      <g className="text-[8px]">
        <text x="28" y="9" fill="#5570e0">Z</text>
        <text x="3" y="61.500" fill="#d84848">X</text>
        <text x="59" y="49.500" fill="#38a848">Y</text>
      </g>
    </svg>
  );
}

const viewTools: { icon: string; width: string; dark?: boolean; sep?: boolean; name: string }[] = [
  { icon: "sketchPlane", width: "w-5", sep: true, name: "Эскиз" },
  { icon: "zoomBox", width: "w-5", name: "Масштаб" },
  { icon: "caret", width: "w-3", name: "Варианты масштаба" },
  { icon: "orient", width: "w-5", name: "Ориентация" },
  { icon: "axes", width: "w-[18px]", name: "Оси" },
  { icon: "caret", width: "w-3", sep: true, name: "Варианты осей" },
  { icon: "cube", width: "w-[18px]", dark: true, name: "Полутоновое" },
  { icon: "wire", width: "w-[18px]", name: "Каркас" },
  { icon: "caret", width: "w-[14px]", sep: true, name: "Варианты каркаса" },
  { icon: "eyeOff", width: "w-[18px]", name: "Скрыть" },
  { icon: "caret", width: "w-[14px]", name: "Варианты скрытия" },
  { icon: "camOff", width: "w-[18px]", name: "Камера" },
  { icon: "caret", width: "w-[18px]", sep: true, name: "Варианты камеры" },
  { icon: "snap", width: "w-[18px]", dark: true, name: "Привязки" },
  { icon: "layers", width: "w-[18px]", name: "Слои" },
  { icon: "sheet", width: "w-[18px]", dark: true, name: "Лист" },
  { icon: "steps", width: "w-5", name: "Шаги" },
  { icon: "funnelW", width: "w-[18px]", dark: true, name: "Фильтр" },
  { icon: "caret", width: "w-[14px]", dark: true, name: "Варианты фильтра" },
  { icon: "measure", width: "w-[18px]", name: "Измерить" },
  { icon: "brush", width: "w-[18px]", name: "Свойства" },
];

function Viewport() {
  return (
    <main className="relative min-w-0 flex-1 overflow-hidden bg-linear-to-b from-[#dddddd] via-[#c5c5ca] to-[#a9a9b3]">
      <Model />
      <div className="absolute top-0 left-[340px] flex h-[17px] border border-t-0 border-[#888] bg-[#f1f1f1] text-[#333]">
        <div className="flex w-[10px] flex-col items-center border-r border-[#888] bg-[#e2e2e2] pt-[2px]">
          <span className="h-[3px] w-2 border-y border-dotted border-[#666]" />
        </div>
        {viewTools.map((v) => (
          <button key={v.name} type="button" aria-label={v.name} className={`flex items-center justify-center ${v.width} ${v.sep ? "border-r border-[#888]" : ""} ${v.dark ? "bg-[#4a4a4a] text-white" : ""}`}>
            {v.icon === "caret" ? <Caret /> : <Glyph name={v.icon} />}
          </button>
        ))}
      </div>
      <Triad />
    </main>
  );
}

/* ---------- taskbar ---------- */

const apps: { name: string; art: ReactNode; state?: string }[] = [
  { name: "Пуск", art: <path d="M3 4.200 7.300 3.600v4.100H3zM8 3.500 13.500 2.700v5H8zM3 8.400h4.300v4.100L3 11.900zM8 8.400h5.500v5L8 12.600z" fill="#fff" /> },
  { name: "Поиск", art: <g fill="none" stroke="#fff" strokeWidth="1.100"><circle cx="9.500" cy="6.500" r="3.800" /><path d="M6.700 9.300 2.500 13.500" /></g> },
  { name: "Блокнот", art: <><path d="M5 1.500h9l-3 12.500L1 12z" fill="#7cc5d8" /><path d="m5 2 7 0-3 10-7-1z" fill="#a9dce8" /><path d="m14 2 .8 1-3 12-10.500-2.500" fill="none" stroke="#e9f4f7" /></> },
  { name: "Калькулятор", art: <><rect x="2.500" y="1" width="11" height="14" rx="2" fill="#b9c3cf" /><path d="M4 3h8v3H4z" fill="#dfe7ee" /><path d="M4 8.500h8M4 11h8M4 13.200h8" stroke="#8d99a6" strokeWidth="1.200" /><path d="m4.500 10 8-5M6 6.500l4 3" stroke="#5d6a78" /></> },
  { name: "Chrome", art: <><circle cx="8" cy="8" r="7.500" fill="#f7c52d" /><path d="M8 8 1.500 4.200A7.500 7.500 0 0 1 14.500 4.300H8z" fill="#e0402f" /><path d="M8 8 1.500 4.200A7.500 7.500 0 0 0 7.300 15.500L11 9.500z" fill="#2ba24c" /><circle cx="8" cy="8" r="3.600" fill="#fff" /><circle cx="8" cy="8" r="2.800" fill="#3f82ee" /></> },
  { name: "Проводник", art: <><path d="M1 2.500h5l1.500 1.500H15v3H1z" fill="#e7a32a" /><path d="M1 5h14v9H1z" fill="#fbd86a" /><path d="M4 14V9.500h8V14h-2.500v-2.500h-3V14z" fill="#3a90d8" /></> },
  { name: "Яндекс", art: <><circle cx="8" cy="8" r="7.800" fill="#f0432c" /><text x="8" y="11.800" textAnchor="middle" fill="#fff" className="text-[11px] font-bold">Я</text></> },
  { name: "Музыка", art: <><circle cx="8" cy="8" r="7.800" fill="#f8d51c" /><path d="M1.500 11.500Q3 8 4.500 4.500L6.500 5 6 10l4.500-6.500.8.500-.8 5.500L15 7" fill="none" stroke="#151515" strokeWidth="2.200" strokeLinejoin="round" strokeLinecap="round" /></> },
  { name: "Яндекс Браузер", state: "open", art: <><circle cx="8" cy="8" r="7.800" fill="#fff" /><path d="m4 4 4 4.500L12 4M8 8.500V13" fill="none" stroke="#f04a36" strokeWidth="2.200" /><path d="M9.500 6.800 12.200 3.800" stroke="#d03cc0" strokeWidth="2.200" /></> },
  { name: "КОМПАС-3D", state: "active", art: <><path d="M.5.500h15v15H.5z" fill="#0f2f44" stroke="#2f8fc4" /><g fill="none" stroke="#38a3da"><circle cx="8" cy="8" r="5.800" /><path d="M6 4v8M11.500 4.500 7.500 8l4 4M4 5.500h4v5H4z" strokeWidth=".9" /></g></> },
];

function Taskbar() {
  return (
    <footer className="flex h-[27px] shrink-0 items-stretch bg-linear-to-r from-[#3f2027] via-[#2c2b38] via-15% to-[#4b2428] text-white">
      <div className="flex flex-1 bg-linear-to-r from-transparent via-[#3f3927] via-20% to-[#25304f]/70">
        {apps.map((a, n) => (
          <button
            key={a.name}
            type="button"
            aria-label={a.name}
            className={`flex items-center justify-center border-b-2 ${n === 0 ? "w-[31px]" : "w-[33px]"} ${a.state === "active" ? "border-[#7ab4ec] bg-white/20" : a.state === "open" ? "border-[#7ab4ec]" : "border-transparent"}`}
          >
            <svg viewBox="0 0 16 16" className="size-4" aria-hidden="true">{a.art}</svg>
          </button>
        ))}
      </div>
      <div className="flex items-center bg-linear-to-r from-[#25304f]/70 to-transparent">
        <svg viewBox="0 0 44 12" className="h-3 w-11" fill="none" stroke="#fff" aria-hidden="true">
          <path d="m1 8 4-4 4 4" />
          <path d="M19.500 3H27v5.500h-7M22 10.500h4M17 2h3v3h-3zM18.500 5v5" strokeWidth=".9" />
          <path d="M32.500 4.500v3H34l3 2.500V2l-3 2.500zM39 4.500l3 3.500M42 4.500 39 8" strokeWidth=".9" />
        </svg>
        <span className="ml-1.5">РУС</span>
        <time className="ml-2 flex w-10 flex-col items-center leading-3 whitespace-nowrap">
          <span>10:57</span>
          <span>26.06.2024</span>
        </time>
        <button type="button" aria-label="Уведомления" className="mr-4 ml-2.5">
          <svg viewBox="0 0 12 12" className="size-3" fill="none" stroke="#fff" aria-hidden="true"><path d="M.8 1.500h10.500v8H8L6 11.500 4 9.500H.8z" /></svg>
        </button>
      </div>
    </footer>
  );
}

export default function App() {
  return (
    <div className="flex h-screen min-h-[480px] flex-col overflow-hidden bg-[#f1f1f1] font-['Noto_Sans','Open_Sans',sans-serif] text-[8px] leading-[12px]">
      <MenuBar />
      <TabBar />
      <Ribbon />
      <div className="flex min-h-0 flex-1">
        <SideStrip />
        <TreePanel />
        <Viewport />
      </div>
      <Taskbar />
    </div>
  );
}
